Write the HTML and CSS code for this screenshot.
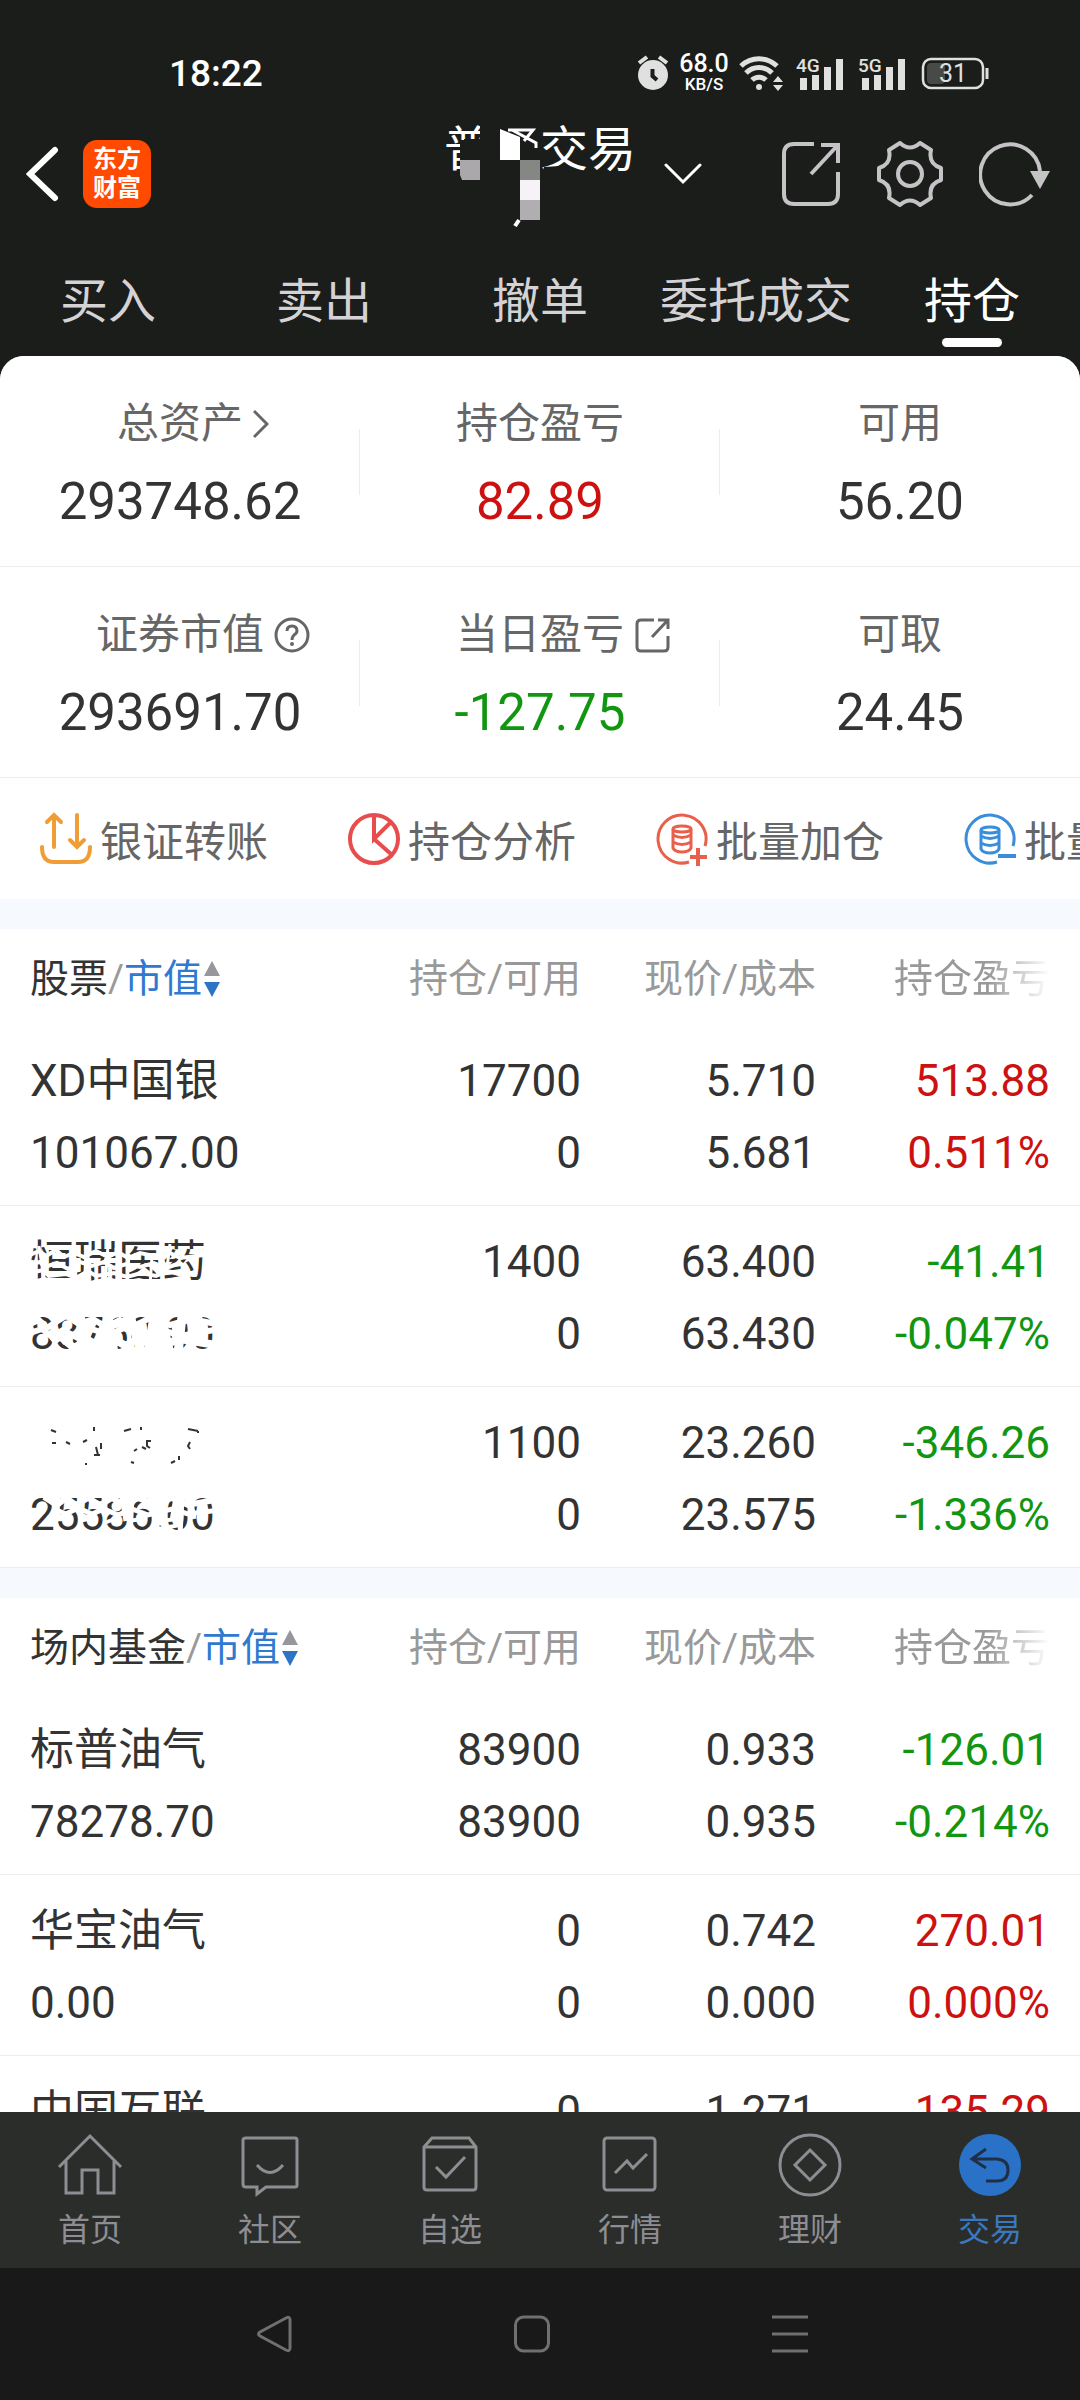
FILE: index.html
```html
<!DOCTYPE html>
<html lang="zh-CN">
<head>
  <meta charset="UTF-8" />
  <meta name="viewport" content="width=device-width, initial-scale=1.0" />
  <title>持仓 - 东方财富</title>
  <link rel="stylesheet" href="styles.css">
</head>
<body>
  <div class="status-bar">
    <span class="clock">18:22</span>
    <div class="status-icons">
      <svg width="34" height="36" viewBox="0 0 34 36">
        <circle cx="17" cy="20" r="15" fill="#e0e0e0" />
        <path d="M3 8 L11 2 M31 8 L23 2" stroke="#e0e0e0" stroke-width="4" fill="none" />
        <path d="M16.500 14 V21 L21 25" stroke="#1a1d1a" stroke-width="4" fill="none" />
      </svg>
      <div class="net-speed"><span class="speed">68.0</span><span class="unit">KB/S</span></div>
      <svg width="46" height="36" viewBox="0 0 46 36" fill="none" stroke="#e0e0e0" stroke-width="5">
        <path d="M3 11 A26 26 0 0 1 39 11" />
        <path d="M8 18 A18 18 0 0 1 34 18" />
        <path d="M14 25 A10 10 0 0 1 28 25" />
        <circle cx="21" cy="32" r="3" fill="#e0e0e0" stroke="none" />
        <path d="M40 21 L45 27 H35 Z M40 36 L45 30 H35 Z" fill="#e0e0e0" stroke="none" />
      </svg>
      <svg width="54" height="44" viewBox="0 -4 54 44" fill="#e0e0e0">
        <text x="4" y="17" class="sig-text">4G</text>
        <path d="M8 23 h7 v12 h-7 z M20 20 h7 v15 h-7 z M32 12 h7 v23 h-7 z M44 4 h7 v31 h-7 z" />
      </svg>
      <svg width="54" height="44" viewBox="0 -4 54 44" fill="#e0e0e0">
        <text x="4" y="17" class="sig-text">5G</text>
        <path d="M8 23 h7 v12 h-7 z M20 20 h7 v15 h-7 z M32 12 h7 v23 h-7 z M44 4 h7 v31 h-7 z" />
      </svg>
      <svg width="73" height="36" viewBox="0 0 73 36">
        <rect x="11" y="8" width="18" height="21" rx="4" fill="#484a48" />
        <rect x="7" y="4" width="60" height="29" rx="8" fill="none" stroke="#e0e0e0" stroke-width="2.500" />
        <path d="M71 13 V24" stroke="#e0e0e0" stroke-width="3" />
        <text x="37" y="27" text-anchor="middle" class="bat-text">31</text>
      </svg>
    </div>
  </div>

  <header class="navbar">
    <div class="nav-left">
      <button class="icon-btn" aria-label="返回">
        <svg width="34" height="60" viewBox="0 0 34 60" fill="none" stroke="#fff" stroke-width="6" stroke-linecap="round">
          <path d="M29 6 L4 30 L29 54" />
        </svg>
      </button>
      <a href="#" class="logo"><span>东方</span><span>财富</span></a>
    </div>
    <div class="title">
      <h1>普通交易</h1>
      <svg class="title-mask" width="192" height="106" viewBox="0 0 192 106">
        <path d="M36 0 H96 V60 H16 V38 L20 28 L20 18 H36 Z" fill="#1a1d1a" />
        <path d="M0 38 H8 V56 H0 Z M16 19 L36 19 V56 H16 Z" fill="#1a1d1a" />
        <path d="M100 46 L116 45 L140 51 V60 H96 Z" fill="#1a1d1a" />
        <path d="M64 9 H89 L80 20 M68 9 L92 22 V27" stroke="#fff" stroke-width="3" fill="none" />
        <path d="M56 8 L76 16 V39 H56 Z" fill="#fff" />
        <path d="M16 39 H36 V59 H18 L16 54 Z" fill="#aaa8ab" />
        <path d="M76 39 H96 V59 H76 Z" fill="#858784" />
        <path d="M76 59 H96 V79 H76 Z" fill="#f6f2f7" />
        <path d="M76 79 H96 V99 H76 Z" fill="#b1aeb2" />
        <path d="M75 99 L71 105" stroke="#fff" stroke-width="4" />
      </svg>
    </div>
    <div class="nav-right">
      <button class="icon-btn" aria-label="切换账户">
        <svg width="38" height="22" viewBox="0 0 38 22" fill="none" stroke="#fff" stroke-width="3" stroke-linecap="round">
          <path d="M2 2 L19 19 L36 2" />
        </svg>
      </button>
      <div class="actions">
        <button class="icon-btn" aria-label="分享">
          <svg width="60" height="66" viewBox="0 0 60 66" fill="none" stroke="#c5c3c6" stroke-width="4">
            <path d="M33 3 H13 Q3 3 3 13 V53 Q3 63 13 63 H47 Q57 63 57 53 V31" />
            <path d="M40 4 H57 V22 M56 5 L30 33" />
          </svg>
        </button>
        <button class="icon-btn" aria-label="设置">
          <svg width="66" height="66" viewBox="0 0 66 66" fill="none" stroke="#c5c3c6" stroke-width="4" stroke-linejoin="round">
            <path d="M23 2 Q33 11 43 2 L54 9 Q51 23 64 27 V39 Q51 43 54 57 L43 64 Q33 55 23 64 L12 57 Q15 43 2 39 V27 Q15 23 12 9 Z" />
            <circle cx="33" cy="33" r="12" />
          </svg>
        </button>
        <button class="icon-btn" aria-label="刷新">
          <svg width="71" height="66" viewBox="0 0 71 66">
            <path d="M53 54 A30 30 0 1 1 61 30" fill="none" stroke="#c5c3c6" stroke-width="4" />
            <path d="M51 30 H71 L61 48 Z" fill="#c5c3c6" />
          </svg>
        </button>
      </div>
    </div>
  </header>

  <nav class="tabs">
    <a href="#">买入</a>
    <a href="#">卖出</a>
    <a href="#">撤单</a>
    <a href="#">委托成交</a>
    <a href="#" class="active">持仓</a>
  </nav>

  <main class="content">
    <section class="summary">
      <div class="cell">
        <div class="label">总资产
          <svg class="ic-arrow" width="16" height="30" viewBox="0 0 16 30" fill="none" stroke="#666" stroke-width="3"><path d="M1 2 L14 15 L1 28" /></svg>
        </div>
        <div class="value">293748.62</div>
      </div>
      <div class="cell">
        <div class="label">持仓盈亏</div>
        <div class="value up">82.89</div>
      </div>
      <div class="cell">
        <div class="label">可用</div>
        <div class="value">56.20</div>
      </div>
      <div class="cell">
        <div class="label">证券市值
          <svg class="ic" width="36" height="36" viewBox="0 0 36 36" fill="none" stroke="#666" stroke-width="3">
            <circle cx="18" cy="18" r="16" />
            <path d="M13 14 Q13 9 18 9 Q23 9 23 14 Q23 16 20 18 Q18 20 18 23" />
            <circle cx="18" cy="27" r="2" fill="#666" stroke="none" />
          </svg>
        </div>
        <div class="value">293691.70</div>
      </div>
      <div class="cell">
        <div class="label">当日盈亏
          <svg class="ic" width="36" height="36" viewBox="0 0 36 36" fill="none" stroke="#666" stroke-width="3">
            <path d="M20 3 H7 Q3 3 3 7 V30 Q3 34 7 34 H30 Q34 34 34 30 V19" />
            <path d="M24 3 H34 V12 M33 4 L18 20" />
          </svg>
        </div>
        <div class="value down">-127.75</div>
      </div>
      <div class="cell">
        <div class="label">可取</div>
        <div class="value">24.45</div>
      </div>
    </section>

    <section class="quick">
      <a href="#">
        <svg width="52" height="54" viewBox="0 0 52 54" fill="none" stroke="#f09d38" stroke-width="4" stroke-linecap="round">
          <path d="M14 35 V3 M7 10 L14 3 L21 10 M37 3 V35 M30 28 L37 35 L44 28" />
          <path d="M2 35 Q2 50 14 50 H38 Q50 50 50 35" />
        </svg>
        银证转账</a>
      <a href="#">
        <svg width="52" height="54" viewBox="0 0 52 54" fill="none" stroke="#e84c4c" stroke-width="4">
          <circle cx="26" cy="27" r="24" />
          <path d="M26 3 V27 L43 10 M26 27 L43 42" />
        </svg>
        持仓分析</a>
      <a href="#">
        <svg width="52" height="54" viewBox="0 0 52 54" fill="none" stroke="#e8604c" stroke-width="3">
          <path d="M49 34 A24 24 0 1 0 33 50" />
          <ellipse cx="26" cy="17" rx="9" ry="3" />
          <path d="M17 17 V36 Q19 40 26 40 Q33 40 35 36 V17 M17 23 Q26 28 35 23 M17 30 Q26 35 35 30" />
          <path d="M34 45 H51 M42 36 V54" stroke-width="4" />
        </svg>
        批量加仓</a>
      <a href="#">
        <svg width="52" height="54" viewBox="0 0 52 54" fill="none" stroke="#3a8ddb" stroke-width="3">
          <path d="M49 34 A24 24 0 1 0 33 50" />
          <ellipse cx="26" cy="18" rx="9" ry="3" />
          <path d="M17 18 V37 Q19 41 26 41 Q33 41 35 37 V18 M17 24 Q26 29 35 24 M17 31 Q26 36 35 31" />
          <path d="M34 44 H52" stroke-width="4" />
        </svg>
        批量减仓</a>
    </section>

    <table class="holdings">
      <colgroup><col><col class="c-num"><col class="c-num"><col class="c-last"></colgroup>
      <thead>
        <tr>
          <th><button class="sort">股票<i>/</i><b>市值</b><svg width="16" height="36" viewBox="0 0 16 36"><path d="M8 0 L16 15 H0 Z" fill="#98969a" /><path d="M0 21 H16 L8 36 Z" fill="#2f73c4" /></svg></button></th>
          <th>持仓/可用</th>
          <th>现价/成本</th>
          <th><span class="fade">持仓盈亏</span></th>
        </tr>
      </thead>
      <tbody>
        <tr>
          <td><span>XD中国银</span><span>101067.00</span></td>
          <td><span>17700</span><span>0</span></td>
          <td><span>5.710</span><span>5.681</span></td>
          <td class="up"><span>513.88</span><span>0.511%</span></td>
        </tr>
        <tr>
          <td>
            <div class="masked">
              <span>恒瑞医药</span><span>88760.00</span>
              <svg class="scribble" width="220" height="144" viewBox="0 0 220 144" fill="none" stroke="#fff" stroke-width="4">
                <path d="M0 29 L9 25 L16 30 L26 24 L34 31 L44 27 L54 31 L66 25 L78 31 L88 26 L98 32 L110 27 L124 30 L138 26 L150 32 L174 29" />
                <path d="M0 38 L10 36 L15 41 L27 37 L38 43 L50 36 L62 40 L74 36 L84 42 L96 38 L110 41 L124 37 L136 42 L150 37" />
                <path d="M0 47 L13 44 L19 50 L36 48 L46 52 L58 45 L66 50 L84 47 L97 51 L111 47 L126 50 L138 45 L152 49" />
                <path d="M4 56 L14 53 L30 56 L46 54 L60 57 L78 53 L92 57 L109 54 L122 57 L140 54" />
                <path d="M9 20 L15 60 M43 20 L47 60 M57 20 L54 60 M78 20 L75 60 M86 22 L90 60 M99 28 L97 60 M122 30 L120 60 M140 18 L137 42" stroke-width="3" />
                <path d="M0 98 L9 94 L17 102 L26 96 L36 90 L49 98 L63 93 L76 101 L90 94 L104 100 L120 92 L140 99 L162 93 L186 98" stroke-width="6" />
                <path d="M0 107 L12 103 L22 111 L33 104 L48 112 L62 103 L78 109 L94 102 L110 109 L130 103 L150 110 L190 103" stroke-width="6" />
                <path d="M22 116 L30 110 L44 122 L58 114 L70 121 L82 112 L96 120 L108 113 L128 121 L150 113 L186 119" stroke-width="8" />
                <path d="M50 90 L60 126 M78 90 L84 127 M100 90 L112 128 M124 90 L118 128 M131 90 L140 128 M152 90 L148 128 M168 90 L160 128" stroke-width="9" />
              </svg>
            </div>
          </td>
          <td><span>1400</span><span>0</span></td>
          <td><span>63.400</span><span>63.430</span></td>
          <td class="down"><span>-41.41</span><span>-0.047%</span></td>
        </tr>
        <tr>
          <td>
            <div class="masked">
              <svg class="smudge" width="180" height="72" viewBox="0 0 180 72" fill="none" stroke="#333" stroke-width="2">
                <path d="M21 23 L26 25 M22 36 h4 M36 35 l4 2 M64 20 v4 M53 35 l4 -2 M66 40 L68 48 M64 48 h6 M71 36 v6 M94 24 L101 22 M111 20 v3 M121 34 h-4 v5 l3 2 M104 44 l3 -2 M112 40 l4 2 M158 22 L168 24 M168 26 v-2 M160 35 l-2 4 l2 3 M149 49 v4 M141 56 l4 -2 M101 55 l3 1 M56 56 v2" />
              </svg>
              <span>25586.00</span>
              <svg class="scribble" width="220" height="144" viewBox="0 0 220 144" fill="none" stroke="#fff" stroke-width="4">
                <path d="M14 90 L27 98 L36 91 L46 98 L58 91 L70 98 L82 91 L94 98 L108 91 L124 97 L142 91 L158 98 L190 92" stroke-width="6" />
                <path d="M24 102 L36 107 L48 101 L62 107 L74 102 L88 108 L102 102 L118 108 L142 102 L158 107 L190 103" stroke-width="5" />
                <path d="M24 113 L34 111 M50 114 L60 111 M74 116 L90 110 M98 114 L112 112 M126 114 L150 112 M128 122 L150 118" />
                <path d="M92 90 L96 114 M102 90 L100 128 M124 90 L128 128 M132 90 L136 128 M146 90 L142 114 M152 90 L150 128 M160 90 L164 112" stroke-width="5" />
              </svg>
            </div>
          </td>
          <td><span>1100</span><span>0</span></td>
          <td><span>23.260</span><span>23.575</span></td>
          <td class="down"><span>-346.26</span><span>-1.336%</span></td>
        </tr>
      </tbody>
    </table>

    <table class="holdings">
      <colgroup><col><col class="c-num"><col class="c-num"><col class="c-last"></colgroup>
      <thead>
        <tr>
          <th><button class="sort">场内基金<i>/</i><b>市值</b><svg width="16" height="36" viewBox="0 0 16 36"><path d="M8 0 L16 15 H0 Z" fill="#98969a" /><path d="M0 21 H16 L8 36 Z" fill="#2f73c4" /></svg></button></th>
          <th>持仓/可用</th>
          <th>现价/成本</th>
          <th><span class="fade">持仓盈亏</span></th>
        </tr>
      </thead>
      <tbody>
        <tr>
          <td><span>标普油气</span><span>78278.70</span></td>
          <td><span>83900</span><span>83900</span></td>
          <td><span>0.933</span><span>0.935</span></td>
          <td class="down"><span>-126.01</span><span>-0.214%</span></td>
        </tr>
        <tr>
          <td><span>华宝油气</span><span>0.00</span></td>
          <td><span>0</span><span>0</span></td>
          <td><span>0.742</span><span>0.000</span></td>
          <td class="up"><span>270.01</span><span>0.000%</span></td>
        </tr>
        <tr>
          <td><span>中国互联</span></td>
          <td><span>0</span></td>
          <td><span>1.271</span></td>
          <td class="up"><span>135.29</span></td>
        </tr>
      </tbody>
    </table>
  </main>

  <nav class="bottom-nav">
    <a href="#">
      <svg width="66" height="66" viewBox="0 0 66 66">
        <path d="M2 34 L33 3 L64 34 M9 28 V60 H25 V37 H41 V60 H57 V28" />
      </svg>
      首页</a>
    <a href="#">
      <svg width="66" height="66" viewBox="0 0 66 66">
        <path d="M9 5 H58 Q60 5 60 7 V52 Q60 54 58 54 H29 L20 61 V54 H9 Q6 54 6 51 V7 Q6 5 9 5 Z M20 32 Q33 47 46 32" />
      </svg>
      社区</a>
    <a href="#">
      <svg width="66" height="66" viewBox="0 0 66 66">
        <path d="M7 14 L15 5 H52 L59 14 V54 Q59 57 56 57 H10 Q7 57 7 54 Z M7 14 H59 M19 34 L29 44 L48 24" />
      </svg>
      自选</a>
    <a href="#">
      <svg width="66" height="66" viewBox="0 0 66 66">
        <rect x="7" y="5" width="51" height="52" rx="3" />
        <path d="M18 40 L30 28 L36 35 L50 21" />
      </svg>
      行情</a>
    <a href="#">
      <svg width="66" height="66" viewBox="0 0 66 66">
        <circle cx="33" cy="32" r="30" />
        <path d="M33 17 L48 32 L33 47 L18 32 Z" />
      </svg>
      理财</a>
    <a href="#" class="active">
      <svg width="66" height="66" viewBox="0 0 66 66">
        <circle cx="33" cy="32" r="31" fill="#2a72c8" stroke="none" />
        <path d="M29 16 L15 26 L29 35 M16 26 H40 Q51 27 51 37 Q51 48 40 48 H29" stroke="#1f2f45" />
      </svg>
      交易</a>
  </nav>

  <div class="system-nav">
    <button class="icon-btn" aria-label="返回键">
      <svg width="36" height="38" viewBox="0 0 36 38"><path d="M30 3 Q34 1 34 5 V33 Q34 37 30 35 L4 21 Q1 19 4 17 Z" /></svg>
    </button>
    <button class="icon-btn" aria-label="主屏幕">
      <svg width="36" height="38" viewBox="0 0 36 38"><rect x="1.500" y="2" width="33" height="34" rx="8" /></svg>
    </button>
    <button class="icon-btn" aria-label="最近任务">
      <svg width="36" height="38" viewBox="0 0 36 38"><path d="M0 2 H36 M0 19 H36 M0 36 H36" /></svg>
    </button>
  </div>
</body>
</html>
```
FILE: styles.css
```css
* {
  box-sizing: border-box;
}

body {
  margin: 0;
  height: 100vh;
  display: flex;
  flex-direction: column;
  overflow: hidden;
  font-family: Roboto, "Noto Sans CJK SC", sans-serif;
  background: #1a1d1a;
  color: #333;
}

a {
  text-decoration: none;
  color: inherit;
}

button {
  background: none;
  border: none;
  padding: 0;
  font: inherit;
  color: inherit;
  cursor: pointer;
}

svg {
  display: block;
  flex-shrink: 0;
}

.icon-btn {
  display: flex;
}

/* status bar */
.status-bar {
  display: flex;
  justify-content: space-between;
  align-items: center;
  padding: 38px 91px 0 169px;
  height: 108px;
  flex-shrink: 0;
  color: #fff;
}

.clock {
  font-size: 37px;
  font-weight: 500;
}

.status-icons {
  display: flex;
  align-items: center;
  gap: 8px;
}

.net-speed {
  width: 52px;
  display: flex;
  flex-direction: column;
  align-items: center;
  font-weight: 500;
}

.speed {
  font-size: 25px;
  line-height: 22px;
}

.unit {
  font-size: 17px;
  line-height: 18px;
}

.sig-text {
  font-size: 19px;
  font-weight: 500;
}

.bat-text {
  font-size: 25px;
  fill: #e0e0e0;
}

/* header */
.navbar {
  display: grid;
  grid-template-columns: 1fr auto 1fr;
  align-items: center;
  height: 132px;
  flex-shrink: 0;
  color: #fff;
}

.nav-left {
  display: flex;
  align-items: center;
  gap: 23px;
  padding-left: 26px;
}

.logo {
  width: 68px;
  height: 68px;
  border-radius: 14px;
  background: #ff4a00;
  display: flex;
  flex-direction: column;
  align-items: center;
  justify-content: center;
  font-size: 24px;
  line-height: 29px;
  font-weight: bold;
}

.title {
  position: relative;
  height: 106px;
}

.title h1 {
  margin: 0;
  font-size: 48px;
  line-height: 58px;
  font-weight: normal;
}

.title-mask {
  position: absolute;
  top: 0;
  left: 0;
}

.nav-right {
  display: flex;
  align-items: center;
  justify-content: space-between;
  padding: 0 30px 0 28px;
}

.actions {
  display: flex;
  gap: 36px;
}

/* top tabs */
.tabs {
  display: grid;
  grid-template-columns: repeat(5, 1fr);
  height: 116px;
  flex-shrink: 0;
  padding-top: 32px;
  font-size: 48px;
  line-height: 60px;
  color: #d4d2d5;
}

.tabs a {
  display: flex;
  flex-direction: column;
  align-items: center;
  white-space: nowrap;
}

.tabs .active {
  color: #fff;
}

.tabs .active::after {
  content: "";
  width: 60px;
  height: 9px;
  margin-top: 6px;
  border-radius: 5px;
  background: #fff;
}

/* content */
.content {
  flex: 1;
  min-height: 0;
  overflow: hidden;
  background: #f6f9fe;
  border-radius: 24px 24px 0 0;
}

.summary {
  display: grid;
  grid-template-columns: repeat(3, 1fr);
  background: #fff;
}

.cell {
  position: relative;
  padding: 38px 0 34px;
  border-bottom: 1px solid #ececec;
  text-align: center;
}

/* short divider between the cells */
.cell:not(:nth-child(3n))::after {
  content: "";
  position: absolute;
  right: 0;
  top: 73px;
  height: 66px;
  border-right: 1px solid #ececec;
}

.label {
  display: flex;
  justify-content: center;
  align-items: center;
  gap: 10px;
  font-size: 42px;
  line-height: 60px;
  color: #666;
}

/* trailing icons hang outside so the text stays centred */
.ic {
  margin-right: -46px;
}

.ic-arrow {
  margin-right: -26px;
}

.value {
  margin-top: 18px;
  font-size: 51px;
  line-height: 60px;
}

.up {
  color: #cc1111;
}

.down {
  color: #129612;
}

.quick {
  display: flex;
  gap: 80px;
  padding: 0 40px;
  height: 121px;
  overflow: hidden;
  background: #fff;
}

.quick a {
  display: flex;
  flex-shrink: 0;
  align-items: center;
  gap: 8px;
  font-size: 42px;
  color: #666;
}

/* holdings */
.holdings {
  width: 100%;
  margin-top: 30px;
  table-layout: fixed;
  border-spacing: 0;
  background: #fff;
  font-size: 44px;
  line-height: 72px;
}

.c-num {
  width: 235px;
}

.c-last {
  width: 264px;
}

.holdings th {
  height: 96px;
  padding: 4px 0 0;
  font-size: 39px;
  font-weight: normal;
  line-height: 60px;
  text-align: right;
  color: #999;
  white-space: nowrap;
}

.holdings td {
  padding: 20px 0 16px;
  border-bottom: 1px solid #ececec;
  text-align: right;
  vertical-align: top;
}

.holdings th:first-child,
.holdings td:first-child {
  padding-left: 30px;
  text-align: left;
}

.holdings th:last-child,
.holdings td:last-child {
  padding-right: 30px;
}

.holdings td span {
  display: block;
}

.sort {
  display: flex;
  align-items: center;
  color: #333;
}

.sort i {
  font-style: normal;
  color: #999;
}

.sort b {
  font-weight: normal;
  color: #3079d0;
  margin-right: 2px;
}

.fade {
  -webkit-mask-image: linear-gradient(to right, #000 60%, transparent);
  mask-image: linear-gradient(to right, #000 60%, transparent);
}

.masked {
  position: relative;
}

.scribble {
  position: absolute;
  top: 0;
  left: 0;
}

/* bottom bars */
.bottom-nav {
  display: grid;
  grid-template-columns: repeat(6, 1fr);
  height: 156px;
  flex-shrink: 0;
  padding-top: 21px;
  background: #2b2d2a;
  font-size: 32px;
  line-height: 40px;
  color: #8e8d93;
}

.bottom-nav a {
  display: flex;
  flex-direction: column;
  align-items: center;
  gap: 11px;
}

.bottom-nav .active {
  color: #3a78c0;
}

.bottom-nav svg {
  fill: none;
  stroke: #8e8d93;
  stroke-width: 3;
}

.system-nav {
  display: flex;
  justify-content: center;
  align-items: center;
  gap: 222px;
  height: 132px;
  flex-shrink: 0;
  padding-right: 16px;
  background: #191919;
}

.system-nav svg {
  fill: none;
  stroke: #707070;
  stroke-width: 3;
}
```
